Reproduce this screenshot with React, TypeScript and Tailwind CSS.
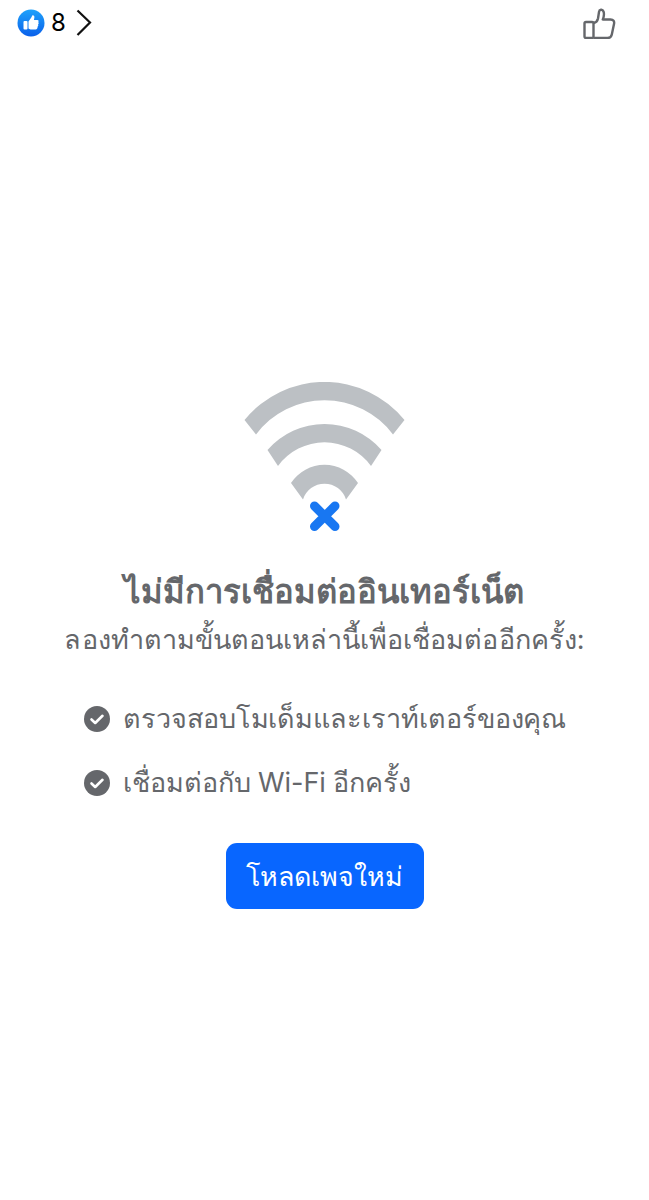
const font = { fontFamily: 'Inter, "Noto Sans", "Liberation Sans", sans-serif' };

function LikeBadge() {
  return (
    <svg width="28" height="28" viewBox="0 0 28 28">
      <defs>
        <linearGradient id="likeBg" x1="0" y1="0" x2="0" y2="1">
          <stop offset="0" stopColor="#1fa2fb" />
          <stop offset="1" stopColor="#0a60ea" />
        </linearGradient>
      </defs>
      <circle cx="14" cy="14" r="13.5" fill="url(#likeBg)" />
      <rect x="6.5" y="12" width="4" height="8.5" rx="1" fill="#fff" />
      <path
        d="M11.5 12.4 L14.3 8.6 C14.7 7.8 14.9 6.9 15.3 6.5 C16.3 6 17.6 6.9 17.4 8.5 L16.9 10.9 L20.3 10.9 C21.7 10.9 22 12.4 21.2 13.1 C22 13.9 21.8 15 21 15.5 C21.5 16.3 21.3 17.3 20.5 17.8 C20.8 19.2 20 20.4 18.6 20.4 L13.5 20.4 C12.6 20.4 12 20 11.5 19.6 Z"
        fill="#fff"
      />
    </svg>
  );
}

function Chevron() {
  return (
    <svg width="18" height="28" viewBox="0 0 18 28" fill="none">
      <path d="M2.5 1.5 L15 13.5 L2.5 26" stroke="#111" strokeWidth="2.2" />
    </svg>
  );
}

function ThumbOutline() {
  return (
    <svg width="33" height="32" viewBox="0 0 33 32" fill="none" stroke="#65676b" strokeWidth="2.4" strokeLinejoin="round">
      <rect x="1.5" y="15" width="9" height="16" rx="1.5" />
      <path d="M10.5 16 C13 15.5 14.5 14 15 11.5 L16 5 C16.2 2.5 19.5 1.8 20.5 4.5 C21.4 7 20.8 10 19.8 12.5 L27.5 12.5 C30.5 12.5 31.6 14.5 31 17 L28.8 27.5 C28.3 29.8 27 31 24.5 31 L10.5 31" />
    </svg>
  );
}

function WifiOff() {
  return (
    <svg width="162" height="150" viewBox="0 0 162 150">
      <g fill="#bcc0c4">
        <path d="M0.5 38 A103 103 0 0 1 160.5 38 L149 52.5 A85.5 85.5 0 0 0 12 52.5 Z" />
        <path d="M23.5 68 A75.5 75.5 0 0 1 137.5 68 L127 84 A57.5 57.5 0 0 0 34 84 Z" />
        <path d="M47 101 A40 40 0 0 1 114 101 L102 117.5 A22.5 22.5 0 0 0 59 117.5 Z" />
      </g>
      <path d="M70.5 124 L91 144.5 M91 124 L70.5 144.5" stroke="#1877f2" strokeWidth="9" strokeLinecap="round" />
    </svg>
  );
}

function CheckItem({ label }: { label: string }) {
  return (
    <div className="flex items-center gap-[13px]">
      <svg width="26" height="26" viewBox="0 0 26 26" className="shrink-0">
        <circle cx="13" cy="13" r="13" fill="#65676b" />
        <path d="M7.5 13.5 L11.2 17 L18.5 9.8" fill="none" stroke="#fff" strokeWidth="2.6" strokeLinecap="round" strokeLinejoin="round" />
      </svg>
      <span className="text-[27px] leading-[38px] tracking-[-0.06px] text-[#65676b]">{label}</span>
    </div>
  );
}

export default function App() {
  return (
    <div className="h-[1200px] w-[649px] bg-white" style={font}>
      {/* top bar */}
      <div className="flex h-[46px] items-center justify-between pl-[17px] pr-[33px]">
        <div className="flex items-center">
          <LikeBadge />
          <span className="ml-[6px] text-[24px] leading-none text-black">8</span>
          <span className="ml-[9px] flex">
            <Chevron />
          </span>
        </div>
        <ThumbOutline />
      </div>

      {/* no connection */}
      <div className="flex flex-col items-center pt-[336px]">
        <WifiOff />
        <h1 className="mt-[37px] text-[32.8px] font-bold leading-[44px] tracking-[0.05px] text-[#65676b]">ไม่มีการเชื่อมต่ออินเทอร์เน็ต</h1>
        <p className="mt-[8px] text-[27px] leading-[38px] tracking-[0.04px] text-[#65676b]">ลองทำตามขั้นตอนเหล่านี้เพื่อเชื่อมต่ออีกครั้ง:</p>
        <div className="mt-[41px] flex w-full flex-col gap-[26px] pl-[84px]">
          <CheckItem label="ตรวจสอบโมเด็มและเราท์เตอร์ของคุณ" />
          <CheckItem label="เชื่อมต่อกับ Wi-Fi อีกครั้ง" />
        </div>
        <button type="button" className="mt-[41px] flex h-[66px] w-[198px] items-center justify-center rounded-[11px] bg-[#0866ff] text-[26.8px] text-white">
          โหลดเพจใหม่
        </button>
      </div>
    </div>
  );
}
